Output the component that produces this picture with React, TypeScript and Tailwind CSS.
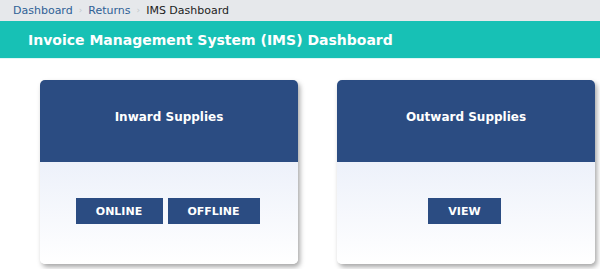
import React from 'react'

const font = { fontFamily: '"DejaVu Sans", Verdana, sans-serif' }

type Card = { title: string; actions: string[] }

const cards: Card[] = [
  { title: 'Inward Supplies', actions: ['ONLINE', 'OFFLINE'] },
  { title: 'Outward Supplies', actions: ['VIEW'] },
]

const btnWidth: Record<string, string> = {
  ONLINE: 'w-[87px]',
  OFFLINE: 'w-[92px]',
  VIEW: 'w-[73px]',
}

export default function App() {
  return (
    <div className="w-[600px] h-[269px] overflow-hidden bg-white" style={font}>
      <div className="h-[21px] bg-[#e6e8eb] flex items-center pl-[13px] text-[11px] leading-none">
        <span className="text-[#2f6196]">Dashboard</span>
        <span className="text-[#c4c8cc] mx-[6px] text-[9px]">›</span>
        <span className="text-[#2f6196]">Returns</span>
        <span className="text-[#c4c8cc] mx-[6px] text-[9px]">›</span>
        <span className="text-[#1d1d1d]">IMS Dashboard</span>
      </div>
      <div className="h-[38px] bg-[#17c1b5] flex items-center pl-[28px] border-b border-[#e0f7f6]">
        <h1 className="text-white font-bold text-[14px] leading-none">
          Invoice Management System (IMS) Dashboard
        </h1>
      </div>
      <div className="flex gap-[39px] pl-[40px] pt-[21px]">
        {cards.map((card) => (
          <div
            key={card.title}
            className="w-[258px] h-[184px] rounded-[5px] overflow-hidden flex flex-col shadow-[2px_3px_5px_rgba(0,0,0,0.35)]"
          >
            <div className="h-[82px] bg-[#2b4c82] flex justify-center pt-[31px]">
              <span className="text-white font-bold text-[12px] leading-none">{card.title}</span>
            </div>
            <div className="flex-1 bg-gradient-to-b from-[#edf1fa] to-white flex justify-center gap-[5px] pt-[36px] pr-[3px]">
              {card.actions.map((a) => (
                <button
                  key={a}
                  className={`${btnWidth[a]} h-[26px] bg-[#2b4c82] text-white font-bold text-[11px] leading-none`}
                >
                  {a}
                </button>
              ))}
            </div>
          </div>
        ))}
      </div>
    </div>
  )
}
